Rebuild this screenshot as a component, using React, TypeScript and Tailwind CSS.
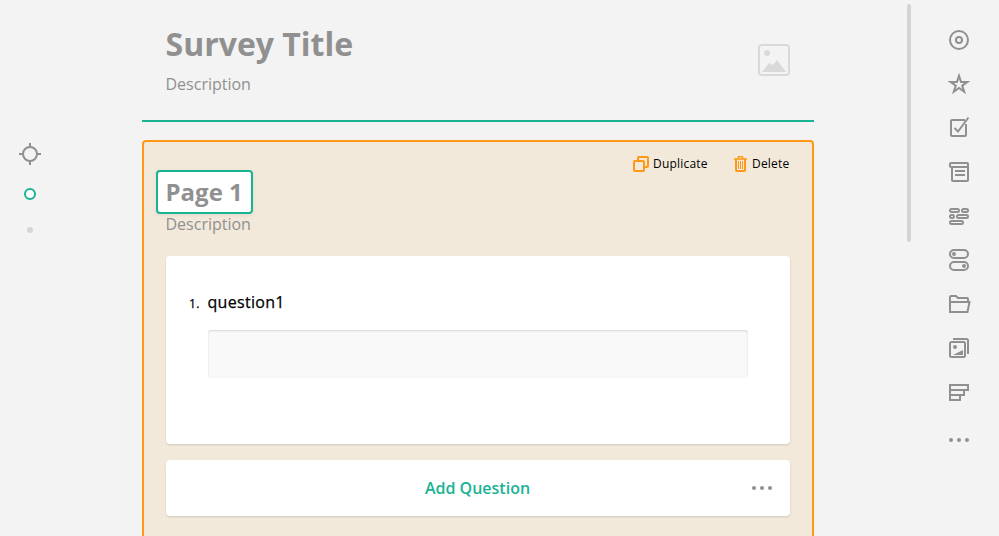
import type { ReactNode } from "react";

function ToolIcon({ children }: { children: ReactNode }) {
  return (
    <button className="flex h-11 w-11 items-center justify-center text-[#909090]">
      <svg width="24" height="24" viewBox="0 0 24 24" fill="none" stroke="currentColor" strokeWidth="2">
        {children}
      </svg>
    </button>
  );
}

function Dots() {
  return (
    <svg width="24" height="24" viewBox="0 0 24 24" fill="#909090">
      <circle cx="4" cy="12" r="2" />
      <circle cx="12" cy="12" r="2" />
      <circle cx="20" cy="12" r="2" />
    </svg>
  );
}

function Toolbox() {
  return (
    <aside className="ml-[26px] flex w-11 flex-col pt-[18px]">
      <ToolIcon>
        <circle cx="12" cy="12" r="9" />
        <circle cx="12" cy="12" r="3" />
      </ToolIcon>
      <ToolIcon>
        <path d="M12 3.800 13.970 9.880H20.370L15.200 13.640 17.170 19.720 12 15.960 6.830 19.720 8.800 13.640 3.630 9.880H10.030Z" />
      </ToolIcon>
      <ToolIcon>
        <path d="M18 4H5a1 1 0 0 0-1 1v14a1 1 0 0 0 1 1h13a1 1 0 0 0 1-1V8" />
        <path d="m7.500 12 3.500 3.500L21.500 1.500" />
      </ToolIcon>
      <ToolIcon>
        <path d="M5 7H4a1 1 0 0 1-1-1V4a1 1 0 0 1 1-1h16a1 1 0 0 1 1 1v16a1 1 0 0 1-1 1H6a1 1 0 0 1-1-1V7h16" />
        <path d="M8 11h10M8 15h10" />
      </ToolIcon>
      <ToolIcon>
        <rect x="3" y="5" width="9" height="3" rx="1.500" />
        <rect x="15" y="5" width="6" height="3" rx="1.500" />
        <rect x="3" y="11" width="4" height="3" rx="1.500" />
        <rect x="10" y="11" width="11" height="3" rx="1.500" />
        <rect x="3" y="17" width="13" height="3" rx="1.500" />
      </ToolIcon>
      <ToolIcon>
        <rect x="3" y="2" width="18" height="8" rx="4" />
        <rect x="3" y="14" width="18" height="8" rx="4" />
        <circle cx="7" cy="6" r="2" fill="currentColor" stroke="none" />
        <circle cx="17" cy="18" r="2" fill="currentColor" stroke="none" />
      </ToolIcon>
      <ToolIcon>
        <path d="M21 10V7a1 1 0 0 0-1-1h-9L9 4H4a1 1 0 0 0-1 1v15h17.500L22.500 10H3" />
      </ToolIcon>
      <ToolIcon>
        <rect x="3" y="6" width="15" height="15" rx="1.500" />
        <path d="M6 3h13.500A1.500 1.500 0 0 1 21 4.500V18" />
        <circle cx="8" cy="11" r="2" fill="currentColor" stroke="none" />
        <path d="M6 19h10v-5Z" fill="currentColor" stroke="none" />
      </ToolIcon>
      <ToolIcon>
        <path d="M3 5h18v5H3zM3 10h14v5H3zM3 15h10v5H3z" />
      </ToolIcon>
      <button className="mt-1 flex h-11 w-11 items-center justify-center">
        <Dots />
      </button>
    </aside>
  );
}

function PageNavigator() {
  return (
    <nav className="flex w-[60px] flex-col items-center pt-[142px]">
      <svg width="24" height="24" viewBox="0 0 24 24" fill="none" stroke="#909090" strokeWidth="2">
        <circle cx="12" cy="12" r="7" />
        <path d="M12 1v4M12 19v4M1 12h4M19 12h4" />
      </svg>
      <span className="mt-[22px] h-3 w-3 rounded-full border-2 border-[#19b394] bg-white" />
      <span className="mt-[27px] h-1.5 w-1.5 rounded-full bg-[#d6d6d6]" />
    </nav>
  );
}

function SurveyHeader() {
  return (
    <header className="flex h-[122px] justify-between border-b-2 border-[#19b394] pr-6 pl-[23.5px]">
      <div className="text-[#909090]">
        <h1 className="mt-[22px] text-[32px] leading-[44px] font-bold">Survey Title</h1>
        <p className="mt-[6px] text-base leading-6">Description</p>
      </div>
      <svg className="mt-11" width="32" height="32" viewBox="0 0 32 32" fill="#d9d9d9">
        <rect x="1" y="1" width="30" height="30" rx="3" fill="none" stroke="#d9d9d9" strokeWidth="2" />
        <circle cx="9" cy="9" r="3" />
        <path d="M4 28 11 19l4 2 4-5 9 12Z" />
      </svg>
    </header>
  );
}

function PageCard() {
  return (
    <section className="mt-[18px] h-[460px] rounded-t border-2 border-[#ff9814] bg-[#f3e9db] px-[22px]">
      <div className="flex h-[30px] items-end justify-end text-xs leading-4 tracking-[0.2px] text-black">
        <button className="flex w-[75px] items-center gap-1">
          <svg width="16" height="16" viewBox="0 0 16 16" fill="none" stroke="#ff9814" strokeWidth="2">
            <path d="M5 5V2a1 1 0 0 1 1-1h8a1 1 0 0 1 1 1v8a1 1 0 0 1-1 1h-3" />
            <rect x="1" y="5" width="10" height="10" rx="1" />
          </svg>
          Duplicate
        </button>
        <button className="ml-[26px] flex w-14 items-center gap-[5px]">
          <svg width="13" height="16" viewBox="0 0 13 16" fill="none" stroke="#ff9814">
            <path d="M0 3h13M4.500 2.500v-2h4v2" strokeWidth="1.500" />
            <path d="M2 3v11a1 1 0 0 0 1 1h7a1 1 0 0 0 1-1V3" strokeWidth="2" />
            <path d="M4.500 5v8M6.500 5v8M8.500 5v8" />
          </svg>
          Delete
        </button>
      </div>
      <h2 className="-mt-0.5 -ml-2.5 flex h-11 w-[97px] items-center rounded border-2 border-[#19b394] bg-white pl-[7.500px] text-2xl font-bold whitespace-nowrap text-[#909090] shadow-[0_1px_4px_rgba(0,0,0,0.08)]">
        Page 1
      </h2>
      <p className="-mt-0.5 -ml-[0.5px] text-base leading-6 text-[#909090]">Description</p>
      <article className="mt-5 h-[188px] rounded bg-white pt-[34px] pr-[42px] pl-[23px] shadow-[0_1px_2px_rgba(0,0,0,0.15)]">
        <div className="flex items-baseline leading-6 text-black [-webkit-text-stroke:0.25px_#000]">
          <span className="w-[18.500px] text-xs font-medium tracking-[0.4px]">1.</span>
          <h3 className="text-base font-medium tracking-[0.3px]">question1</h3>
        </div>
        <div className="mt-4 ml-[19px] h-12 rounded-[3px] bg-[#f9f9f9] shadow-[inset_0_1px_2px_rgba(0,0,0,0.15)]" />
      </article>
      <div className="mt-4 flex h-14 items-center justify-end rounded bg-white pr-4 pl-[39px] shadow-[0_1px_2px_rgba(0,0,0,0.15)]">
        <button className="flex-1 text-center text-base font-semibold text-[#19b394]">Add Question</button>
        <Dots />
      </div>
    </section>
  );
}

export default function App() {
  return (
    <div className="flex h-[536px] w-[999px] overflow-hidden bg-[#f3f3f3] font-['Open_Sans','Noto_Sans',sans-serif]">
      <PageNavigator />
      <main className="ml-[82px] w-[672px]">
        <SurveyHeader />
        <PageCard />
      </main>
      <div className="mt-1 ml-[93px] h-[238px] w-1 rounded-sm bg-[#d4d4d4]" />
      <Toolbox />
    </div>
  );
}
